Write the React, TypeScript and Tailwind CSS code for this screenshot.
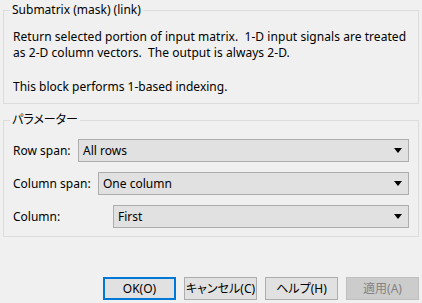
import React from "react";

const font = { fontFamily: '"Noto Sans", "Noto Sans CJK JP", sans-serif' };

function Arrow() {
  return (
    <svg width="8" height="5" viewBox="0 0 8 5" className="shrink-0">
      <polygon points="0,0 8,0 4,5" fill="#000" />
    </svg>
  );
}

function Select({ value }: { value: string }) {
  return (
    <div className="flex-1 h-[23px] bg-[#e1e1e1] border border-[#adadad] flex items-center pl-[4px] pr-[6px]">
      <span className="flex-1 text-[12px] leading-[16px] text-black">{value}</span>
      <Arrow />
    </div>
  );
}

function Row({ label, w, value }: { label: string; w: string; value: string }) {
  return (
    <div className="flex items-center h-[23px]">
      <span className={`${w} shrink-0 text-[12px] leading-[16px] text-black`}>{label}</span>
      <Select value={value} />
    </div>
  );
}

function Btn({ children, kind }: { children: React.ReactNode; kind?: "default" | "disabled" }) {
  const cls =
    kind === "default"
      ? "border-2 border-[#0078d7] bg-[#e1e1e1] text-black"
      : kind === "disabled"
      ? "border border-[#bfbfbf] bg-[#cccccc] text-[#838383]"
      : "border border-[#adadad] bg-[#e1e1e1] text-black";
  return (
    <div className={`w-[73px] h-[23px] flex items-center justify-center whitespace-nowrap text-[12px] leading-[16px] ${cls}`}>
      {children}
    </div>
  );
}

export default function App() {
  return (
    <div
      className="w-[422px] h-[303px] bg-[#f0f0f0] px-[3px] pt-[2px] flex flex-col [font-feature-settings:'palt']"
      style={font}
    >
      <fieldset className="border border-[#dcdcdc] pl-[9px] pr-[9px] pt-[11px] pb-[8px] m-0 min-w-0">
        <legend className="-ml-[3px] px-[2px] text-[12px] leading-[16px] text-black">Submatrix (mask) (link)</legend>
        <p className="text-[12px] leading-[16px] text-black whitespace-pre tracking-[0.05px]">
          {"Return selected portion of input matrix.  1-D input signals are treated\nas 2-D column vectors.  The output is always 2-D."}
        </p>
        <p className="mt-[18px] text-[12px] leading-[16px] text-black">This block performs 1-based indexing.</p>
      </fieldset>
      <fieldset className="mt-[8px] border border-[#dcdcdc] pl-[9px] pr-[9px] pt-[11px] pb-[8px] m-0 min-w-0">
        <legend className="-ml-[3px] px-[2px] text-[12px] leading-[16px] text-black">パラメーター</legend>
        <div className="flex flex-col gap-[10px]">
          <Row label="Row span:" w="w-[65px]" value="All rows" />
          <Row label="Column span:" w="w-[85px]" value="One column" />
          <Row label="Column:" w="w-[100px]" value="First" />
        </div>
      </fieldset>
      <div className="mt-[40px] flex justify-end gap-[8px]">
        <Btn kind="default">OK(O)</Btn>
        <Btn>キャンセル(C)</Btn>
        <Btn>ヘルプ(H)</Btn>
        <Btn kind="disabled">適用(A)</Btn>
      </div>
    </div>
  );
}
